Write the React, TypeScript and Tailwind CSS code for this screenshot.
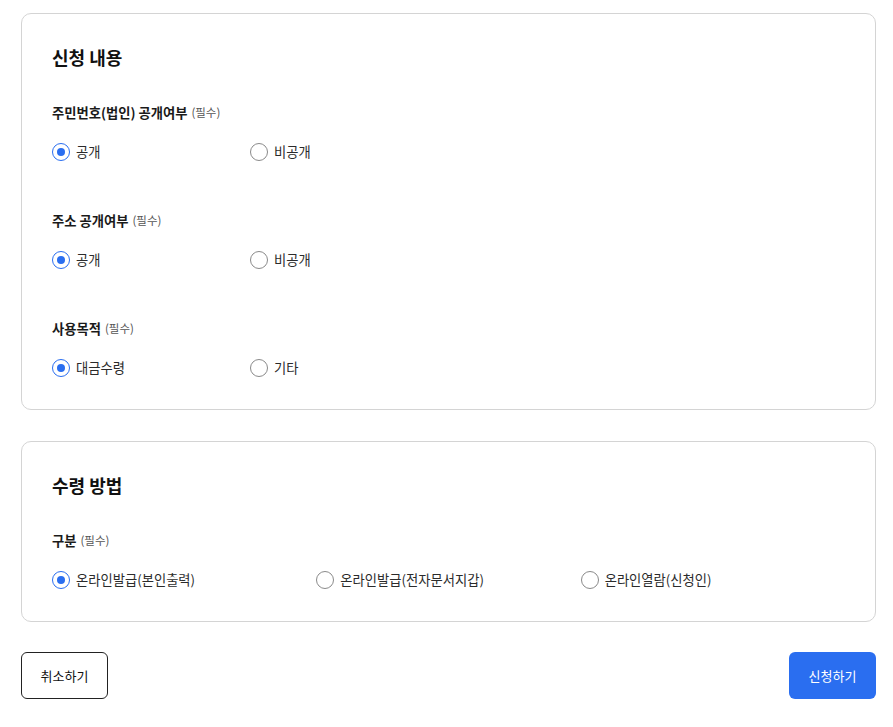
import { useState } from 'react'

type Option = { value: string; label: string }

type Field = {
  name: string
  label: string
  options: Option[]
  colWidth: string
}

const contentFields: Field[] = [
  {
    name: 'idPublic',
    label: '주민번호(법인) 공개여부',
    options: [
      { value: 'open', label: '공개' },
      { value: 'closed', label: '비공개' },
    ],
    colWidth: 'w-[198px]',
  },
  {
    name: 'addrPublic',
    label: '주소 공개여부',
    options: [
      { value: 'open', label: '공개' },
      { value: 'closed', label: '비공개' },
    ],
    colWidth: 'w-[198px]',
  },
  {
    name: 'purpose',
    label: '사용목적',
    options: [
      { value: 'payment', label: '대금수령' },
      { value: 'etc', label: '기타' },
    ],
    colWidth: 'w-[198px]',
  },
]

const receiveField: Field = {
  name: 'receive',
  label: '구분',
  options: [
    { value: 'print', label: '온라인발급(본인출력)' },
    { value: 'wallet', label: '온라인발급(전자문서지갑)' },
    { value: 'view', label: '온라인열람(신청인)' },
  ],
  colWidth: 'w-[265px]',
}

function Radio({ checked, label, onClick }: { checked: boolean; label: string; onClick: () => void }) {
  return (
    <button type="button" onClick={onClick} className="flex items-center gap-[6px] h-5 text-left">
      <span
        className={
          checked
            ? 'w-[18px] h-[18px] rounded-full border-[1.5px] border-[#2a6ef0] flex items-center justify-center'
            : 'w-[18px] h-[18px] rounded-full border border-[#8a8a8a]'
        }
      >
        {checked && <span className="w-[8px] h-[8px] rounded-full bg-[#2a6ef0]" />}
      </span>
      <span className="text-[13.3px] text-[#2b2b2b]">{label}</span>
    </button>
  )
}

function RadioField({ field, value, onChange, first }: { field: Field; value: string; onChange: (v: string) => void; first?: boolean }) {
  return (
    <div className={first ? 'mt-[33px]' : 'mt-[49px]'}>
      <div className="h-5 flex items-center">
        <span className="text-[13.3px] font-bold text-[#1a1a1a]">{field.label}</span>
        <span className="ml-[4px] text-[11.5px] text-[#555]">(필수)</span>
      </div>
      <div className="mt-[19px] flex">
        {field.options.map((o) => (
          <div key={o.value} className={field.colWidth}>
            <Radio checked={value === o.value} label={o.label} onClick={() => onChange(o.value)} />
          </div>
        ))}
      </div>
    </div>
  )
}

export default function App() {
  const [form, setForm] = useState<Record<string, string>>({
    idPublic: 'open',
    addrPublic: 'open',
    purpose: 'payment',
    receive: 'print',
  })

  const set = (name: string) => (v: string) => setForm((f) => ({ ...f, [name]: v }))

  return (
    <div
      className="bg-white min-h-screen pl-[21px] pr-[17px] pt-[13px] pb-6"
      style={{ fontFamily: '"Noto Sans CJK KR", "Noto Sans", sans-serif' }}
    >
      <section className="border border-[#d4d4d4] rounded-[10px] px-[30px] pt-[30px] pb-[31px]">
        <h2 className="text-[18px] leading-[26px] font-bold text-[#111]">신청 내용</h2>
        {contentFields.map((f, i) => (
          <RadioField key={f.name} field={f} value={form[f.name]} onChange={set(f.name)} first={i === 0} />
        ))}
      </section>

      <section className="mt-[31px] border border-[#d4d4d4] rounded-[10px] px-[30px] pt-[30px] pb-[31px]">
        <h2 className="text-[18px] leading-[26px] font-bold text-[#111]">수령 방법</h2>
        <RadioField field={receiveField} value={form.receive} onChange={set('receive')} first />
      </section>

      <div className="mt-[30px] flex justify-between">
        <button
          type="button"
          className="w-[87px] h-[47px] rounded-[6px] border border-[#222] bg-white text-[13px] text-[#111]"
        >
          취소하기
        </button>
        <button type="button" className="w-[87px] h-[47px] rounded-[6px] bg-[#2a6ef0] text-[13px] text-white">
          신청하기
        </button>
      </div>
    </div>
  )
}
